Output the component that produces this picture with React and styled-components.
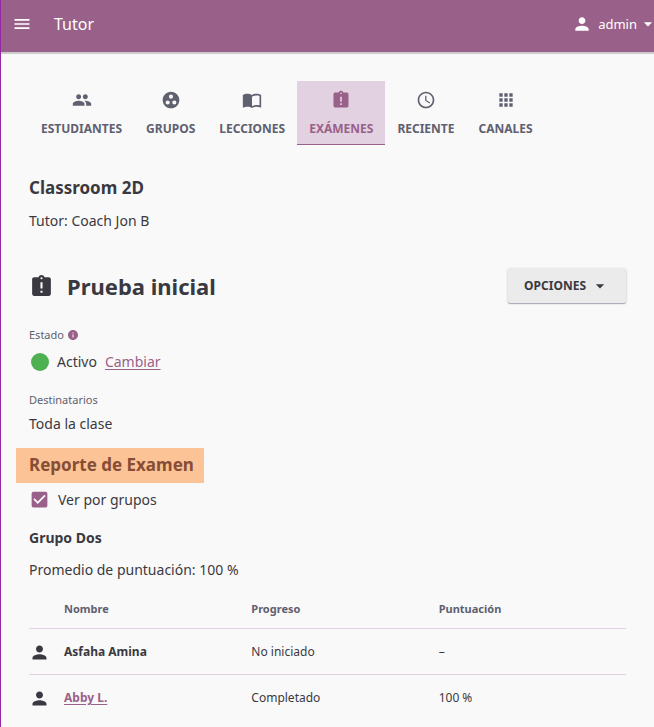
import React, { useState } from 'react';
import styled, { createGlobalStyle } from 'styled-components';
import {
  MdMenu, MdPeople, MdGroupWork, MdAssignmentLate, MdAccessTime,
  MdApps, MdPerson, MdArrowDropDown, MdInfo, MdCheckBox, MdCheckBoxOutlineBlank,
} from 'react-icons/md';

const brand = '#996189';
const ink = '#3a3941';
const muted = '#5f6070';
const line = '#e0d2e0';

const GlobalStyle = createGlobalStyle`
  * { box-sizing: border-box; }
  body {
    margin: 0;
    background: #f9f9f9;
    color: ${ink};
    font-family: "Noto Sans", sans-serif;
    font-size: 14px;
    line-height: 20px;
  }
  button { font: inherit; border: 0; cursor: pointer; }
  svg { display: block; flex: none; }
  h1, h2, h3, p { margin: 0; }
`;

const Page = styled.div`
  min-height: 100vh;
  overflow-x: clip;
  border-left: 1px solid #9429a3;
`;

const AppBar = styled.header`
  display: flex;
  align-items: center;
  height: 52px;
  padding: 0 0 4px 11px;
  background: ${brand};
  color: #fff;
  box-shadow: 0 2px 0 #cbcbcb;
`;

const BarButton = styled.button`
  display: flex;
  align-items: center;
  padding: 0;
  background: none;
  color: inherit;
  font-size: 13px;
`;

const UserButton = styled(BarButton)`
  margin-right: -4px;
`;

const BarTitle = styled.div`
  margin-left: 22px;
  font-size: 16px;
  line-height: 24px;
  flex: 1;
`;

const UserName = styled.span`
  margin: 0 1px 0 6px;
`;

const Content = styled.main`
  padding: 29px 28px 16px;
`;

const Tabs = styled.nav`
  display: flex;
  flex-wrap: wrap;
`;

const Tab = styled.a`
  display: flex;
  flex-direction: column;
  align-items: center;
  gap: 9px;
  height: 64px;
  padding: 9px 12px 0;
  font-size: 12px;
  font-weight: 700;
  text-decoration: none;
  color: ${(p) => (p.$active ? brand : muted)};
  background: ${(p) => (p.$active ? '#e1d1e1' : 'transparent')};
  border-bottom: 1px solid ${(p) => (p.$active ? brand : 'transparent')};
`;

const ClassName = styled.h2`
  margin-top: 31px;
  font-size: 17px;
  line-height: 24px;
`;

const Coach = styled.p`
  margin-top: 11px;
`;

const TitleRow = styled.div`
  display: flex;
  align-items: center;
  margin-top: 38px;
`;

const Title = styled.h1`
  flex: 1;
  margin-left: 13px;
  font-size: 22px;
  line-height: 32px;
`;

const OptionsButton = styled.button`
  display: flex;
  align-items: center;
  gap: 4px;
  height: 34px;
  padding: 0 16px;
  border-radius: 2px;
  background: #ebebeb;
  color: ${ink};
  font-size: 12px;
  font-weight: 700;
  box-shadow: 0 1px 1px #a9a8b4, 0 0 3px #d0d0d4;
`;

const Label = styled.div`
  display: flex;
  align-items: center;
  gap: 3px;
  margin-top: ${(p) => p.$top}px;
  font-size: 11px;
  line-height: 16px;
  color: ${muted};
`;

const Line = styled.div`
  display: flex;
  align-items: center;
  gap: 8px;
  margin-top: ${(p) => p.$top}px;
`;

const StatusDot = styled.span`
  width: 18px;
  height: 18px;
  margin-left: 2px;
  border-radius: 50%;
  background: #4db051;
`;

const Link = styled.a`
  color: ${brand};
  text-underline-offset: 2px;
`;

const Highlight = styled.h2`
  width: fit-content;
  margin: 14px 0 0 -13px;
  padding: 5px 10px 6px 13px;
  background: #fbc396;
  color: #874d35;
  font-size: 17px;
  line-height: 24px;
`;

const CheckLabel = styled.label`
  display: flex;
  align-items: center;
  gap: 8px;
  margin-top: 6px;
`;

const CheckBox = styled.span`
  display: grid;
  color: ${brand};
  > * { grid-area: 1 / 1; }
  input { margin: 0; width: 21px; height: 21px; appearance: none; }
  svg { pointer-events: none; }
`;

const GroupName = styled.h3`
  margin-top: 18px;
  font-size: 14px;
  line-height: 20px;
`;

const Average = styled.p`
  margin-top: 12px;
`;

const Table = styled.table`
  width: 100%;
  margin-top: 11px;
  border-collapse: collapse;
  table-layout: fixed;
  font-size: 12px;
  text-align: left;
  th, td { padding: 0; vertical-align: middle; }
  thead tr { height: 37px; }
  tbody tr { height: 46px; border-top: 1px solid ${line}; }
  thead th { font-size: 11px; color: ${muted}; }
  tbody th, tbody td { padding-top: 2px; }
`;

const IconCol = styled.col`
  width: 35px;
`;

function BookIcon() {
  return (
    <svg width="22" height="20" viewBox="0 0 24 24" fill="currentColor" aria-hidden="true">
      <path d="M21 5c-1.11-.35-2.33-.5-3.5-.5-1.95 0-4.05.4-5.5 1.5-1.45-1.1-3.55-1.5-5.5-1.5S2.45 4.9 1 6v14.65c0 .25.25.5.5.5.1 0 .15-.05.25-.05C3.1 20.45 5.05 20 6.5 20c1.95 0 4.05.4 5.5 1.5 1.35-.85 3.8-1.5 5.5-1.5 1.65 0 3.35.3 4.75 1.05.1.05.15.05.25.05.25 0 .5-.25.5-.5V6c-.6-.45-1.25-.75-2-1zm0 13.5c-1.1-.35-2.3-.5-3.5-.5-1.7 0-4.15.65-5.5 1.5V8c1.35-.85 3.8-1.5 5.5-1.5 1.2 0 2.4.15 3.5.5v11.5z" />
    </svg>
  );
}

const tabs = [
  { label: 'ESTUDIANTES', Icon: MdPeople },
  { label: 'GRUPOS', Icon: MdGroupWork },
  { label: 'LECCIONES', Icon: BookIcon },
  { label: 'EXÁMENES', Icon: MdAssignmentLate, active: true },
  { label: 'RECIENTE', Icon: MdAccessTime },
  { label: 'CANALES', Icon: MdApps },
];

const learners = [
  { name: 'Asfaha Amina', progress: 'No iniciado', score: '–' },
  { name: 'Abby L.', progress: 'Completado', score: '100 %', link: true },
];

export default function App() {
  const [byGroup, setByGroup] = useState(true);
  const CheckIcon = byGroup ? MdCheckBox : MdCheckBoxOutlineBlank;

  return (
    <Page>
      <GlobalStyle />
      <AppBar>
        <BarButton aria-label="Menú"><MdMenu size={20} /></BarButton>
        <BarTitle>Tutor</BarTitle>
        <UserButton>
          <MdPerson size={20} />
          <UserName>admin</UserName>
          <MdArrowDropDown size={20} />
        </UserButton>
      </AppBar>
      <Content>
        <Tabs>
          {tabs.map(({ label, Icon, active }) => (
            <Tab key={label} href="#" $active={active} aria-current={active ? 'page' : undefined}>
              <Icon size={20} />
              {label}
            </Tab>
          ))}
        </Tabs>

        <ClassName>Classroom 2D</ClassName>
        <Coach>Tutor: Coach Jon B</Coach>

        <TitleRow>
          <MdAssignmentLate size={25} />
          <Title>Prueba inicial</Title>
          <OptionsButton>
            OPCIONES
            <MdArrowDropDown size={20} />
          </OptionsButton>
        </TitleRow>

        <Label $top={24}>Estado <MdInfo size={12} color={brand} /></Label>
        <Line $top={9}>
          <StatusDot />
          <span>Activo</span>
          <Link href="#">Cambiar</Link>
        </Line>
        <Label $top={20}>Destinatarios</Label>
        <Line $top={6}>Toda la clase</Line>

        <Highlight>Reporte de Examen</Highlight>
        <CheckLabel>
          <CheckBox>
            <input type="checkbox" checked={byGroup} onChange={(e) => setByGroup(e.target.checked)} />
            <CheckIcon size={21} />
          </CheckBox>
          Ver por grupos
        </CheckLabel>

        <GroupName>Grupo Dos</GroupName>
        <Average>Promedio de puntuación: 100 %</Average>

        <Table>
          <colgroup><IconCol /><col /><col /><col /></colgroup>
          <thead>
            <tr>
              <th aria-label="Usuario" />
              <th scope="col">Nombre</th>
              <th scope="col">Progreso</th>
              <th scope="col">Puntuación</th>
            </tr>
          </thead>
          <tbody>
            {learners.map((l) => (
              <tr key={l.name}>
                <td><MdPerson size={21} /></td>
                <th scope="row">{l.link ? <Link href="#">{l.name}</Link> : l.name}</th>
                <td>{l.progress}</td>
                <td>{l.score}</td>
              </tr>
            ))}
          </tbody>
        </Table>
      </Content>
    </Page>
  );
}
